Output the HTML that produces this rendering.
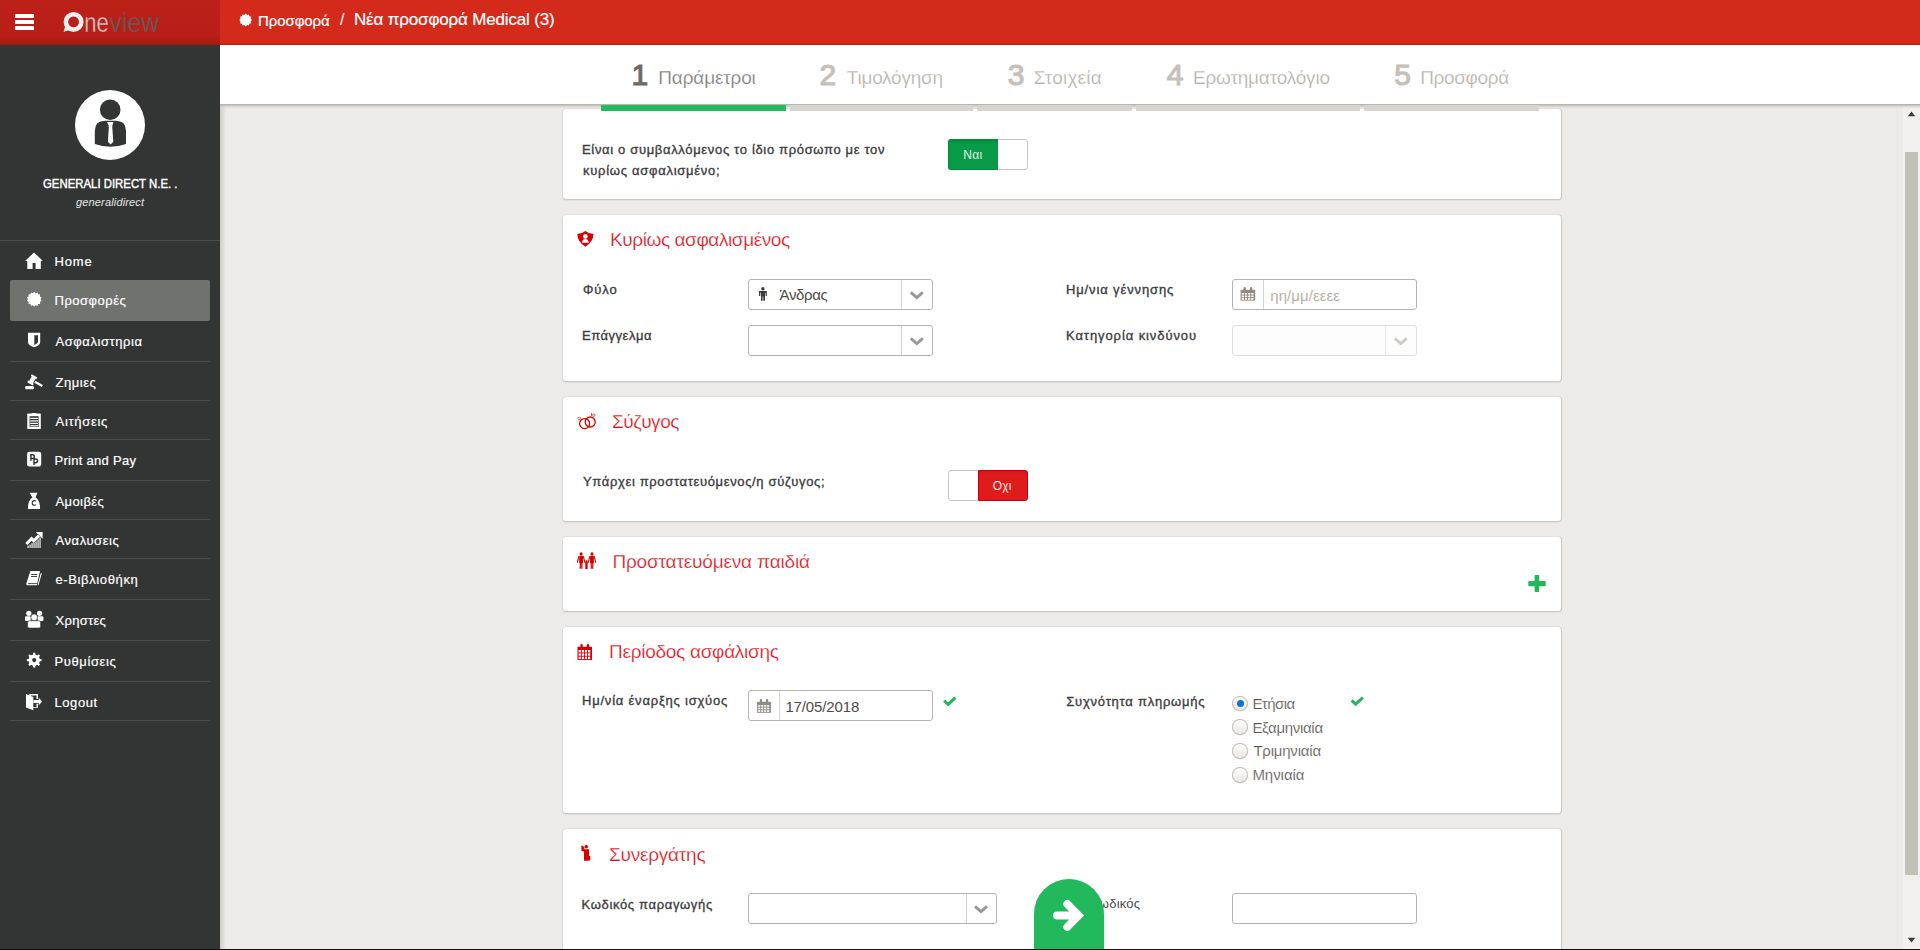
<!DOCTYPE html>
<html><head><meta charset="utf-8"><title>Oneview</title>
<style>
html,body{margin:0;padding:0;}
body{width:1920px;height:950px;overflow:hidden;position:relative;background:#ecebe9;font-family:"Liberation Sans", sans-serif;}
.t{position:absolute;white-space:nowrap;}
.a{position:absolute;}
#topbar{position:absolute;left:0;top:0;width:1920px;height:45px;background:linear-gradient(#d32a1b 0,#d32a1b 43px,#c91b0b 44px,#c91b0b 45px);}
#topbar-left{position:absolute;left:0;top:0;width:220px;height:45px;background:linear-gradient(#bb2019 0,#b91f18 36px,#a91d12 42px,#a01c0f 45px);}
#sidebar{position:absolute;left:0;top:45px;width:220px;height:905px;background:#333534;}
#tabs{position:absolute;left:220px;top:44px;width:1700px;height:60px;background:#fff;}
#tabshadow{position:absolute;left:220px;top:104px;width:1700px;height:5px;background:linear-gradient(#c9c6c0,rgba(236,235,233,0));}
.card{position:absolute;left:563px;width:998px;background:#fff;border-radius:2.5px;box-shadow:0 1px 2px rgba(60,50,40,.2),0 0 1px rgba(60,50,40,.32),1px 0 1px rgba(60,50,40,.1);}
.sep{position:absolute;left:10px;width:200px;height:1px;background:#4b4d4c;}
.prog{position:absolute;top:105px;height:6px;background:#d6d4cf;}
.inp{position:absolute;box-sizing:border-box;border:1px solid #b9b4ad;border-radius:3px;background:#fff;height:31px;}
.inp .dv{position:absolute;top:0;bottom:0;width:1px;background:#d8d5d0;}
.tg{position:absolute;box-sizing:border-box;border:1px solid #c9c5bf;border-radius:3px;background:#fff;width:80px;height:31px;overflow:hidden;}
.radio{position:absolute;width:15.5px;height:15.5px;box-sizing:border-box;border-radius:50%;border:1px solid #b9b4ae;box-shadow:0 0.5px 1px rgba(0,0,0,.12);background:linear-gradient(#fdfdfd,#e9e7e4);}

</style></head><body>
<div id="topbar"></div><div id="topbar-left"></div>
<div id="sidebar"></div>
<div class="a" style="left:0;top:240px;width:220px;height:1px;background:#4b4d4c"></div>
<div class="sep" style="top:361px"></div>
<div class="sep" style="top:400px"></div>
<div class="sep" style="top:439px"></div>
<div class="sep" style="top:480px"></div>
<div class="sep" style="top:519px"></div>
<div class="sep" style="top:558px"></div>
<div class="sep" style="top:599px"></div>
<div class="sep" style="top:640px"></div>
<div class="sep" style="top:681px"></div>
<div class="sep" style="top:720px"></div>
<div class="a" style="left:10px;top:280px;width:200px;height:41px;background:#70726d;border-radius:2px"></div>
<div class="a" style="left:220px;top:104px;width:6px;height:846px;background:linear-gradient(90deg,rgba(150,145,138,.35),rgba(236,235,233,0))"></div>
<div class="a" style="left:75px;top:90px;width:70px;height:70px;border-radius:50%;background:#fff"></div>
<div class="card" style="top:109px;height:90px"></div>
<div class="card" style="top:215px;height:166px"></div>
<div class="card" style="top:397px;height:124px"></div>
<div class="card" style="top:537px;height:74px"></div>
<div class="card" style="top:627px;height:186px"></div>
<div class="card" style="top:829px;height:160px"></div>
<div id="tabs2" class="a" style="left:220px;top:45px;width:1700px;height:59px;background:#fff"></div>
<div class="a" style="left:220px;top:104px;width:1700px;height:5px;background:linear-gradient(rgba(178,173,165,1),rgba(196,192,186,.75) 35%,rgba(214,211,206,.35) 70%,rgba(236,235,233,0))"></div>
<div class="prog" style="left:601px;width:185px;background:#22bb5b"></div>
<div class="prog" style="left:790px;width:183px"></div>
<div class="prog" style="left:977px;width:155px"></div>
<div class="prog" style="left:1136px;width:224px"></div>
<div class="prog" style="left:1364px;width:175px"></div>
<div class="t" style="display:none"></div>
<div class="tg" style="left:948px;top:139px"></div><div class="a" style="left:948px;top:139px;width:50px;height:31px;box-sizing:border-box;border:1px solid #078a3e;border-right:0;border-radius:3px 0 0 3px;background:linear-gradient(#008b3f,#0a9b49 4px,#0a9b49)"></div>
<div class="inp" style="left:748px;top:279px;width:185px"><div class="dv" style="left:152px"></div></div>
<div class="inp" style="left:748px;top:325px;width:185px"><div class="dv" style="left:152px"></div></div>
<div class="inp" style="left:1232px;top:279px;width:185px"><div class="dv" style="left:30px"></div></div>
<div class="inp" style="left:1232px;top:325px;width:185px;border-color:#e2dfdb;background:#fdfdfd"><div class="dv" style="left:152px;background:#e8e6e2"></div></div>
<div class="tg" style="left:948px;top:470px"></div><div class="a" style="left:978px;top:470px;width:50px;height:31px;box-sizing:border-box;border:1px solid #c9000c;border-radius:0 3px 3px 0;background:linear-gradient(#c81a1c,#e01b1b 4px,#e01b1b)"></div>
<div class="inp" style="left:748px;top:690px;width:185px"><div class="dv" style="left:30px"></div></div>
<div class="radio" style="left:1232px;top:695.5px"></div>
<div class="radio" style="left:1232px;top:719.3px"></div>
<div class="radio" style="left:1232px;top:743.1px"></div>
<div class="radio" style="left:1232px;top:767.1px"></div>
<div class="a" style="left:1236.5px;top:699.5px;width:7px;height:7px;border-radius:50%;background:#0b72dc"></div>
<div class="inp" style="left:748px;top:893px;width:249px"><div class="dv" style="left:217px"></div></div>
<div class="inp" style="left:1232px;top:893px;width:185px"></div>
<div class="t" id="bc1" style="left:258.00px;top:12.60px;font-size:15px;line-height:15px;color:#fff;font-weight:normal;letter-spacing:-0.081px;-webkit-text-stroke:0.2px #fff;">Προσφορά</div>
<div class="t" id="bcsl" style="left:340.00px;top:11.76px;font-size:16px;line-height:16px;color:#fff;font-weight:normal;">/</div>
<div class="t" id="bc2" style="left:354.00px;top:10.91px;font-size:17px;line-height:17px;color:#fff;font-weight:normal;letter-spacing:-0.168px;-webkit-text-stroke:0.2px #fff;">Νέα προσφορά Medical (3)</div>
<div class="t" id="gen" style="left:43.00px;top:176.77px;font-size:13.5px;line-height:13.5px;color:#fff;font-weight:normal;-webkit-text-stroke:0.45px #fff;transform:scaleX(0.843);transform-origin:0 0;">GENERALI DIRECT N.E. .</div>
<div class="t" id="gend" style="left:76.00px;top:196.59px;font-size:11px;line-height:11px;color:#e6e6e6;font-weight:normal;font-style:italic;letter-spacing:0.155px;">generalidirect</div>
<div class="t" id="m0" style="left:54.50px;top:254.80px;font-size:13px;line-height:13px;color:#fff;font-weight:normal;letter-spacing:0.851px;-webkit-text-stroke:0.2px #fff;">Home</div>
<div class="t" id="m1" style="left:54.50px;top:294.00px;font-size:13px;line-height:13px;color:#fff;font-weight:normal;letter-spacing:0.514px;-webkit-text-stroke:0.2px #fff;">Προσφορές</div>
<div class="t" id="m2" style="left:55.50px;top:334.90px;font-size:13px;line-height:13px;color:#fff;font-weight:normal;letter-spacing:0.573px;-webkit-text-stroke:0.2px #fff;">Ασφαλιστηρια</div>
<div class="t" id="m3" style="left:55.50px;top:376.40px;font-size:13px;line-height:13px;color:#fff;font-weight:normal;letter-spacing:0.531px;-webkit-text-stroke:0.2px #fff;">Ζημιες</div>
<div class="t" id="m4" style="left:55.50px;top:415.10px;font-size:13px;line-height:13px;color:#fff;font-weight:normal;letter-spacing:0.710px;-webkit-text-stroke:0.2px #fff;">Αιτήσεις</div>
<div class="t" id="m5" style="left:54.50px;top:453.80px;font-size:13px;line-height:13px;color:#fff;font-weight:normal;letter-spacing:0.288px;-webkit-text-stroke:0.2px #fff;">Print and Pay</div>
<div class="t" id="m6" style="left:55.50px;top:494.50px;font-size:13px;line-height:13px;color:#fff;font-weight:normal;letter-spacing:0.408px;-webkit-text-stroke:0.2px #fff;">Αμοιβές</div>
<div class="t" id="m7" style="left:55.50px;top:534.00px;font-size:13px;line-height:13px;color:#fff;font-weight:normal;letter-spacing:0.568px;-webkit-text-stroke:0.2px #fff;">Αναλυσεις</div>
<div class="t" id="m8" style="left:55.50px;top:572.70px;font-size:13px;line-height:13px;color:#fff;font-weight:normal;letter-spacing:0.621px;-webkit-text-stroke:0.2px #fff;">e-Βιβλιοθήκη</div>
<div class="t" id="m9" style="left:55.50px;top:613.80px;font-size:13px;line-height:13px;color:#fff;font-weight:normal;letter-spacing:0.292px;-webkit-text-stroke:0.2px #fff;">Χρηστες</div>
<div class="t" id="m10" style="left:54.50px;top:654.60px;font-size:13px;line-height:13px;color:#fff;font-weight:normal;letter-spacing:0.613px;-webkit-text-stroke:0.2px #fff;">Ρυθμίσεις</div>
<div class="t" id="m11" style="left:54.50px;top:695.80px;font-size:13px;line-height:13px;color:#fff;font-weight:normal;letter-spacing:0.570px;-webkit-text-stroke:0.2px #fff;">Logout</div>
<div class="t" id="tn0" style="left:631.50px;top:60.11px;font-size:30px;line-height:30px;color:#6e6a66;font-weight:normal;-webkit-text-stroke:1.1px #6e6a66;">1</div>
<div class="t" id="tl0" style="left:658.30px;top:68.12px;font-size:19px;line-height:19px;color:#7c7874;font-weight:normal;letter-spacing:-0.166px;-webkit-text-stroke:0.25px #fff;">Παράμετροι</div>
<div class="t" id="tn1" style="left:819.50px;top:60.11px;font-size:30px;line-height:30px;color:#c5c0ba;font-weight:normal;-webkit-text-stroke:1.1px #c5c0ba;">2</div>
<div class="t" id="tl1" style="left:846.80px;top:68.12px;font-size:19px;line-height:19px;color:#b5b0a9;font-weight:normal;letter-spacing:-0.239px;-webkit-text-stroke:0.25px #fff;">Τιμολόγηση</div>
<div class="t" id="tn2" style="left:1007.80px;top:60.11px;font-size:30px;line-height:30px;color:#c5c0ba;font-weight:normal;-webkit-text-stroke:1.1px #c5c0ba;">3</div>
<div class="t" id="tl2" style="left:1033.70px;top:68.12px;font-size:19px;line-height:19px;color:#b5b0a9;font-weight:normal;letter-spacing:0.211px;-webkit-text-stroke:0.25px #fff;">Στοιχεία</div>
<div class="t" id="tn3" style="left:1166.70px;top:60.11px;font-size:30px;line-height:30px;color:#c5c0ba;font-weight:normal;-webkit-text-stroke:1.1px #c5c0ba;">4</div>
<div class="t" id="tl3" style="left:1193.00px;top:68.12px;font-size:19px;line-height:19px;color:#b5b0a9;font-weight:normal;letter-spacing:-0.199px;-webkit-text-stroke:0.25px #fff;">Ερωτηματολόγιο</div>
<div class="t" id="tn4" style="left:1394.20px;top:60.11px;font-size:30px;line-height:30px;color:#c5c0ba;font-weight:normal;-webkit-text-stroke:1.1px #c5c0ba;">5</div>
<div class="t" id="tl4" style="left:1420.20px;top:68.12px;font-size:19px;line-height:19px;color:#b5b0a9;font-weight:normal;letter-spacing:-0.360px;-webkit-text-stroke:0.25px #fff;">Προσφορά</div>
<div class="t" id="c1l1" style="left:582.00px;top:143.20px;font-size:13px;line-height:13px;color:#3d3d3d;font-weight:normal;letter-spacing:0.665px;-webkit-text-stroke:0.35px #3d3d3d;">Είναι ο συμβαλλόμενος το ίδιο πρόσωπο με τον</div>
<div class="t" id="c1l2" style="left:583.00px;top:163.50px;font-size:13px;line-height:13px;color:#3d3d3d;font-weight:normal;letter-spacing:0.732px;-webkit-text-stroke:0.35px #3d3d3d;">κυρίως ασφαλισμένο;</div>
<div class="t" id="nai" style="left:963.20px;top:148.54px;font-size:12px;line-height:12px;color:#fff;font-weight:normal;letter-spacing:0.398px;-webkit-text-stroke:0.15px #0a9b49;">Ναι</div>
<div class="t" id="c2t" style="left:610.00px;top:229.92px;font-size:19px;line-height:19px;color:#d8121b;font-weight:normal;letter-spacing:-0.406px;-webkit-text-stroke:0.25px #fff;">Κυρίως ασφαλισμένος</div>
<div class="t" id="c2a" style="left:583.00px;top:282.50px;font-size:13px;line-height:13px;color:#3d3d3d;font-weight:normal;letter-spacing:0.938px;-webkit-text-stroke:0.35px #3d3d3d;">Φύλο</div>
<div class="t" id="c2b" style="left:582.00px;top:328.90px;font-size:13px;line-height:13px;color:#3d3d3d;font-weight:normal;letter-spacing:0.530px;-webkit-text-stroke:0.35px #3d3d3d;">Επάγγελμα</div>
<div class="t" id="c2c" style="left:1066.00px;top:283.00px;font-size:13px;line-height:13px;color:#3d3d3d;font-weight:normal;letter-spacing:0.873px;-webkit-text-stroke:0.35px #3d3d3d;">Ημ/νια γέννησης</div>
<div class="t" id="c2d" style="left:1066.00px;top:328.70px;font-size:13px;line-height:13px;color:#3d3d3d;font-weight:normal;letter-spacing:0.912px;-webkit-text-stroke:0.35px #3d3d3d;">Κατηγορία κινδύνου</div>
<div class="t" id="andras" style="left:779.60px;top:287.40px;font-size:15px;line-height:15px;color:#4f4b47;font-weight:normal;letter-spacing:-0.359px;">Άνδρας</div>
<div class="t" id="ph" style="left:1270.30px;top:287.80px;font-size:15px;line-height:15px;color:#b8b1a8;font-weight:normal;letter-spacing:0.070px;">ηη/μμ/εεεε</div>
<div class="t" id="c3t" style="left:612.00px;top:411.92px;font-size:19px;line-height:19px;color:#d8121b;font-weight:normal;letter-spacing:-0.445px;-webkit-text-stroke:0.25px #fff;">Σύζυγος</div>
<div class="t" id="c3a" style="left:583.00px;top:474.80px;font-size:13px;line-height:13px;color:#3d3d3d;font-weight:normal;letter-spacing:0.650px;-webkit-text-stroke:0.35px #3d3d3d;">Υπάρχει προστατευόμενος/η σύζυγος;</div>
<div class="t" id="ochi" style="left:992.80px;top:480.14px;font-size:12px;line-height:12px;color:#fff;font-weight:normal;letter-spacing:0.184px;-webkit-text-stroke:0.15px #e01b1b;">Οχι</div>
<div class="t" id="c4t" style="left:612.40px;top:552.32px;font-size:19px;line-height:19px;color:#d8121b;font-weight:normal;letter-spacing:-0.170px;-webkit-text-stroke:0.25px #fff;">Προστατευόμενα παιδιά</div>
<div class="t" id="c5t" style="left:609.00px;top:641.72px;font-size:19px;line-height:19px;color:#d8121b;font-weight:normal;letter-spacing:-0.270px;-webkit-text-stroke:0.25px #fff;">Περίοδος ασφάλισης</div>
<div class="t" id="c5a" style="left:582.00px;top:694.20px;font-size:13px;line-height:13px;color:#3d3d3d;font-weight:normal;letter-spacing:0.789px;-webkit-text-stroke:0.35px #3d3d3d;">Ημ/νία έναρξης ισχύος</div>
<div class="t" id="date" style="left:785.40px;top:698.50px;font-size:15px;line-height:15px;color:#4f4b47;font-weight:normal;letter-spacing:-0.126px;">17/05/2018</div>
<div class="t" id="c5b" style="left:1066.30px;top:694.60px;font-size:13px;line-height:13px;color:#3d3d3d;font-weight:normal;letter-spacing:0.769px;-webkit-text-stroke:0.35px #3d3d3d;">Συχνότητα πληρωμής</div>
<div class="t" id="r0" style="left:1252.40px;top:695.70px;font-size:15px;line-height:15px;color:#58534e;font-weight:normal;letter-spacing:-0.573px;-webkit-text-stroke:0.2px #fff;">Ετήσια</div>
<div class="t" id="r1" style="left:1252.40px;top:719.50px;font-size:15px;line-height:15px;color:#58534e;font-weight:normal;letter-spacing:-0.312px;-webkit-text-stroke:0.2px #fff;">Εξαμηνιαία</div>
<div class="t" id="r2" style="left:1253.40px;top:743.30px;font-size:15px;line-height:15px;color:#58534e;font-weight:normal;letter-spacing:-0.206px;-webkit-text-stroke:0.2px #fff;">Τριμηνιαία</div>
<div class="t" id="r3" style="left:1252.40px;top:767.30px;font-size:15px;line-height:15px;color:#58534e;font-weight:normal;letter-spacing:-0.046px;-webkit-text-stroke:0.2px #fff;">Μηνιαία</div>
<div class="t" id="c6t" style="left:609.00px;top:844.72px;font-size:19px;line-height:19px;color:#d8121b;font-weight:normal;letter-spacing:-0.230px;-webkit-text-stroke:0.25px #fff;">Συνεργάτης</div>
<div class="t" id="c6a" style="left:581.50px;top:897.60px;font-size:13px;line-height:13px;color:#3d3d3d;font-weight:normal;letter-spacing:0.661px;-webkit-text-stroke:0.35px #3d3d3d;">Κωδικός παραγωγής</div>
<div class="t" id="c6b" style="left:1067.00px;top:896.50px;font-size:13px;line-height:13px;color:#4a4a4a;font-weight:normal;letter-spacing:0.203px;">Υποκωδικός</div>
<svg class="a" style="left:0;top:0" width="1920" height="950" viewBox="0 0 1920 950"><rect x="15" y="14" width="19" height="4" rx="0.8" fill="#fff"/><rect x="15" y="20" width="19" height="4" rx="0.8" fill="#fff"/><rect x="15" y="26" width="19" height="4" rx="0.8" fill="#fff"/><circle cx="73.6" cy="21.9" r="7.7" fill="none" stroke="#f1efed" stroke-width="4.6"/><path d="M65.2 26.5 L63.6 31.8 L69.5 30.2 Z" fill="#f1efed"/><text x="84.3" y="31.6" font-size="27" fill="#cdc7c1" stroke="#bb2019" stroke-width="0.35" textLength="24.6" lengthAdjust="spacingAndGlyphs" font-family="Liberation Sans">ne</text><text x="109.6" y="31.6" font-size="27" fill="#5f5d5b" stroke="#bb2019" stroke-width="0.35" textLength="49.6" lengthAdjust="spacingAndGlyphs" font-family="Liberation Sans">view</text><polygon points="245.60,13.60 246.97,14.88 248.80,14.46 249.35,16.25 251.14,16.80 250.72,18.63 252.00,20.00 250.72,21.37 251.14,23.20 249.35,23.75 248.80,25.54 246.97,25.12 245.60,26.40 244.23,25.12 242.40,25.54 241.85,23.75 240.06,23.20 240.48,21.37 239.20,20.00 240.48,18.63 240.06,16.80 241.85,16.25 242.40,14.46 244.23,14.88" fill="#fff"/><path d="M25.3 260.8 L34 252.5 L42.7 260.8 L40.8 261.2 L40.8 269 L35.6 269 L35.6 263 L32.6 263 L32.6 269 L27.3 269 L27.3 261.2 Z" fill="#fff"/><polygon points="34.30,291.70 35.68,293.16 37.55,292.44 38.17,294.35 40.16,294.52 39.89,296.51 41.61,297.53 40.50,299.20 41.61,300.87 39.89,301.89 40.16,303.88 38.17,304.05 37.55,305.96 35.68,305.24 34.30,306.70 32.92,305.24 31.05,305.96 30.43,304.05 28.44,303.88 28.71,301.89 26.99,300.87 28.10,299.20 26.99,297.53 28.71,296.51 28.44,294.52 30.43,294.35 31.05,292.44 32.92,293.16" fill="#fff"/><path d="M28 332.7 H40.2 V342 Q40.2 345.5 34.1 347.2 Q28 345.5 28 342 Z" fill="#fff"/><path d="M34.3 335.2 H38 V342 Q37.6 343.6 34.3 344.9 Z" fill="#333534"/><polygon points="31.79,376.38 35.61,378.58 32.81,383.42 28.99,381.22" fill="#fff"/><polygon points="31.83,374.33 37.37,377.53 36.37,379.27 30.83,376.07" fill="#fff"/><polygon points="28.23,380.53 33.77,383.73 32.77,385.47 27.23,382.27" fill="#fff"/><polygon points="35.45,380.65 42.90,384.95 41.75,386.95 34.30,382.65" fill="#fff"/><rect x="25.2" y="386" width="8.7" height="3.2" rx="1.2" fill="#fff"/><rect x="27.3" y="413.6" width="13.5" height="15.5" rx="0.6" fill="#fff"/><rect x="29.6" y="416.2" width="9" height="10.8" fill="#333534"/><rect x="30.2" y="417.8" width="7.8" height="1.2" fill="#fff"/><rect x="30.2" y="420.3" width="7.8" height="1.2" fill="#fff"/><rect x="30.2" y="422.8" width="7.8" height="1.2" fill="#fff"/><rect x="30.2" y="425.2" width="7.8" height="1.2" fill="#fff"/><rect x="31.5" y="413" width="5" height="2" rx="1" fill="#fff"/><rect x="27.1" y="451.7" width="14.1" height="14.7" rx="2.2" fill="#fff"/><path d="M30.9 454.1 V460.8 M30.9 454.8 H32.5 A1.85 1.85 0 0 1 32.5 458.5 H30.9" fill="none" stroke="#333534" stroke-width="1.45"/><path d="M34 458.3 V465 M34 459 H35.7 A1.85 1.85 0 0 1 35.7 462.7 H34" fill="none" stroke="#333534" stroke-width="1.45"/><path d="M29.6 492.8 L37.4 492.8 L35.6 497.3 Q40.1 500.5 40.1 508.9 H27.9 Q27.9 500.5 32.3 497.3 Z" fill="#fff"/><path d="M36 501.2 Q35.3 500.6 34.4 500.6 Q32.2 500.6 32.2 502.9 Q32.2 505.2 34.4 505.2 Q35.3 505.2 36 504.6" fill="none" stroke="#333534" stroke-width="1.1"/><path d="M26.3 544 L31.6 538.6 L33.8 540.8 L39 535.6" fill="none" stroke="#fff" stroke-width="3"/><path d="M35.8 532 H42.6 V538.8 Z" fill="#fff"/><rect x="27.5" y="545.5" width="1.1" height="2.5" fill="#fff"/><rect x="29.5" y="544.5" width="1.1" height="3.5" fill="#fff"/><rect x="31.5" y="543" width="1.1" height="5" fill="#fff"/><rect x="33.5" y="543" width="1.1" height="5" fill="#fff"/><rect x="35.5" y="541.5" width="1.1" height="6.5" fill="#fff"/><rect x="37.5" y="539.5" width="1.1" height="8.5" fill="#fff"/><rect x="39.5" y="537.5" width="1.1" height="10.5" fill="#fff"/><path d="M30.3 570.9 H40 L36.8 585.3 H27.5 Q26 585.3 26.4 583.6 Z" fill="#fff"/><path d="M40.8 573 L41.8 573.5 L38.5 585 L37.6 585 Z" fill="#fff"/><rect x="31.3" y="574" width="6" height="0.9" fill="#333534"/><rect x="31" y="576" width="6" height="0.9" fill="#333534"/><rect x="28" y="583.2" width="8.8" height="0.9" fill="#333534"/><circle cx="28.8" cy="613.3" r="2.6" fill="#fff"/><circle cx="39.6" cy="613.3" r="2.6" fill="#fff"/><rect x="25" y="616.3" width="5.8" height="4.6" rx="1" fill="#fff"/><rect x="37.6" y="616.3" width="5.8" height="4.6" rx="1" fill="#fff"/><circle cx="34.2" cy="617.4" r="3.3" fill="#fff" stroke="#333534" stroke-width="0.6"/><rect x="27.6" y="620.8" width="13" height="7.2" rx="1.6" fill="#fff" stroke="#333534" stroke-width="0.6"/><polygon points="33.00,654.63 33.09,652.78 35.31,652.78 35.40,654.63 37.22,655.38 38.58,654.14 40.16,655.72 38.92,657.08 39.67,658.90 41.52,658.99 41.52,661.21 39.67,661.30 38.92,663.12 40.16,664.48 38.58,666.06 37.22,664.82 35.40,665.57 35.31,667.42 33.09,667.42 33.00,665.57 31.18,664.82 29.82,666.06 28.24,664.48 29.48,663.12 28.73,661.30 26.88,661.21 26.88,658.99 28.73,658.90 29.48,657.08 28.24,655.72 29.82,654.14 31.18,655.38" fill="#fff"/><circle cx="34.2" cy="660.1" r="5.6" fill="#fff"/><circle cx="34.2" cy="660.1" r="2.1" fill="#333534"/><path d="M29.2 694 H38 V699 H36.5 V695.6 H30.7 V707 H36.5 V703.8 H38 V707.8 H29.2 Z" fill="#fff"/><path d="M26 694 L33.3 697 V710.2 L26 707.6 Z" fill="#fff"/><path d="M33.5 700.1 H38.8 V697.8 L42.2 701.5 L38.8 705.2 V702.9 H33.5 Z" fill="#fff"/><circle cx="110.2" cy="109.8" r="10.3" fill="#333534"/><path d="M94.8 144 V131 Q94.8 120.8 105 120.8 H115.8 Q126 120.8 126 131 V144 Q110.4 149.5 94.8 144 Z" fill="#333534"/><path d="M107.1 122 H113.4 L112.2 126.3 L113.3 141.8 L110.6 144.4 L107.9 141.8 L108.9 126.3 Z" fill="#fff"/><path d="M108.3 126.4 H112.2" stroke="#ddd" stroke-width="0.5"/><path d="M585.4 231 Q581.8 234 577.3 234.1 Q577.6 242 585.4 246.8 Q593.2 242 593.5 234.1 Q589 234 585.4 231 Z" fill="#d60000"/><circle cx="585.4" cy="236.4" r="2.3" fill="#fff"/><path d="M582.1 242.8 Q582.1 238.9 585.4 238.9 Q588.7 238.9 588.7 242.8 Z" fill="#fff"/><circle cx="584.6" cy="423.6" r="5" fill="none" stroke="#d60000" stroke-width="1.3"/><circle cx="590.2" cy="422" r="5" fill="none" stroke="#d60000" stroke-width="1.3"/><circle cx="579.3" cy="418.5" r="1.3" fill="none" stroke="#e3454a" stroke-width="0.9"/><path d="M591.5 413 V416" stroke="#e3454a" stroke-width="1"/><circle cx="593.8" cy="415.2" r="1.2" fill="none" stroke="#e3454a" stroke-width="0.9"/><circle cx="581.1" cy="553.9" r="1.55" fill="#d60000"/><path d="M579.2 556.6 Q579.2 555.8 580.0 555.8 H582.2 Q583.0 555.8 583.0 556.6 V563 H582.5 V568.8 H581.25 V563.5 H580.95 V568.8 H579.7 V563 H579.2 Z" fill="#d60000"/><path d="M578.8000000000001 556.6 L577.4 562.2 M583.4 556.6 L584.8000000000001 562.2" stroke="#d60000" stroke-width="1.1" stroke-linecap="round"/><circle cx="592.0" cy="553.9" r="1.55" fill="#d60000"/><path d="M590.1 556.6 Q590.1 555.8 590.9 555.8 H593.1 Q593.9 555.8 593.9 556.6 V563 H593.4 V568.8 H592.15 V563.5 H591.85 V568.8 H590.6 V563 H590.1 Z" fill="#d60000"/><path d="M589.7 556.6 L588.3 562.2 M594.3 556.6 L595.7 562.2" stroke="#d60000" stroke-width="1.1" stroke-linecap="round"/><circle cx="586.5" cy="561.3" r="1.15" fill="#d60000"/><path d="M585.3 563 H587.7 V569 H585.3 Z" fill="#d60000"/><path d="M584.6 562.6 L588.4 562.6" stroke="#d60000" stroke-width="0.9"/><rect x="577.5" y="646.8" width="14.5" height="13.2" fill="#d60000"/><rect x="580.4" y="644" width="2.32" height="5" rx="1.16" fill="#d60000"/><rect x="586.78" y="644" width="2.32" height="5" rx="1.16" fill="#d60000"/><rect x="578.60" y="650.00" width="2.25" height="2.43" fill="#fff"/><rect x="581.75" y="650.00" width="2.25" height="2.43" fill="#fff"/><rect x="584.90" y="650.00" width="2.25" height="2.43" fill="#fff"/><rect x="588.05" y="650.00" width="2.25" height="2.43" fill="#fff"/><rect x="578.60" y="653.33" width="2.25" height="2.43" fill="#fff"/><rect x="581.75" y="653.33" width="2.25" height="2.43" fill="#fff"/><rect x="584.90" y="653.33" width="2.25" height="2.43" fill="#fff"/><rect x="588.05" y="653.33" width="2.25" height="2.43" fill="#fff"/><rect x="578.60" y="656.67" width="2.25" height="2.43" fill="#fff"/><rect x="581.75" y="656.67" width="2.25" height="2.43" fill="#fff"/><rect x="584.90" y="656.67" width="2.25" height="2.43" fill="#fff"/><rect x="588.05" y="656.67" width="2.25" height="2.43" fill="#fff"/><circle cx="586.2" cy="846.7" r="1.8" fill="#d60000"/><path d="M581.3 845.8 L583.2 845.8 L584.6 849.2 H589 V856 H590.2 V860.5 H588.5 V860.8 H584 V851.6 L581.5 851 Z" fill="#d60000"/><circle cx="762.9" cy="288.8" r="1.7" fill="#3c3c3c"/><path d="M759 291 H766.8 V296 H765.6 V292.8 H765 V300.8 H763.3 V296.5 H762.6 V300.8 H761 V292.8 H760.3 V296 H759 Z" fill="#3c3c3c"/><rect x="1240.6" y="289.8" width="14.6" height="10.8" fill="#918b85"/><rect x="1243.52" y="287" width="2.336" height="5" rx="1.168" fill="#918b85"/><rect x="1249.944" y="287" width="2.336" height="5" rx="1.168" fill="#918b85"/><rect x="1241.70" y="293.00" width="2.27" height="1.63" fill="#fff"/><rect x="1244.88" y="293.00" width="2.27" height="1.63" fill="#fff"/><rect x="1248.05" y="293.00" width="2.27" height="1.63" fill="#fff"/><rect x="1251.23" y="293.00" width="2.27" height="1.63" fill="#fff"/><rect x="1241.70" y="295.53" width="2.27" height="1.63" fill="#fff"/><rect x="1244.88" y="295.53" width="2.27" height="1.63" fill="#fff"/><rect x="1248.05" y="295.53" width="2.27" height="1.63" fill="#fff"/><rect x="1251.23" y="295.53" width="2.27" height="1.63" fill="#fff"/><rect x="1241.70" y="298.07" width="2.27" height="1.63" fill="#fff"/><rect x="1244.88" y="298.07" width="2.27" height="1.63" fill="#fff"/><rect x="1248.05" y="298.07" width="2.27" height="1.63" fill="#fff"/><rect x="1251.23" y="298.07" width="2.27" height="1.63" fill="#fff"/><rect x="757.1" y="701.8" width="13.8" height="11.0" fill="#918b85"/><rect x="759.86" y="699" width="2.208" height="5" rx="1.104" fill="#918b85"/><rect x="765.932" y="699" width="2.208" height="5" rx="1.104" fill="#918b85"/><rect x="758.20" y="705.00" width="2.08" height="1.70" fill="#fff"/><rect x="761.18" y="705.00" width="2.08" height="1.70" fill="#fff"/><rect x="764.15" y="705.00" width="2.08" height="1.70" fill="#fff"/><rect x="767.12" y="705.00" width="2.08" height="1.70" fill="#fff"/><rect x="758.20" y="707.60" width="2.08" height="1.70" fill="#fff"/><rect x="761.18" y="707.60" width="2.08" height="1.70" fill="#fff"/><rect x="764.15" y="707.60" width="2.08" height="1.70" fill="#fff"/><rect x="767.12" y="707.60" width="2.08" height="1.70" fill="#fff"/><rect x="758.20" y="710.20" width="2.08" height="1.70" fill="#fff"/><rect x="761.18" y="710.20" width="2.08" height="1.70" fill="#fff"/><rect x="764.15" y="710.20" width="2.08" height="1.70" fill="#fff"/><rect x="767.12" y="710.20" width="2.08" height="1.70" fill="#fff"/><path d="M910.8 292.4 L916.8 297.6 L922.8 292.4" fill="none" stroke="#9a9693" stroke-width="2.8"/><path d="M910.8 338.4 L916.8 343.6 L922.8 338.4" fill="none" stroke="#9a9693" stroke-width="2.8"/><path d="M1394.8 338.4 L1400.8 343.6 L1406.8 338.4" fill="none" stroke="#cfcbc6" stroke-width="2.8"/><path d="M975 906.4 L981 911.6 L987 906.4" fill="none" stroke="#9a9693" stroke-width="2.8"/><path d="M944.1 700.5999999999999 L948.2 704.4 L955.4 697.6999999999999" fill="none" stroke="#22b75a" stroke-width="3"/><path d="M1351.6 700.4 L1355.7 704.2 L1362.9 697.5" fill="none" stroke="#22b75a" stroke-width="3"/><rect x="1528.3" y="581" width="17.4" height="5.2" rx="0.8" fill="#22b75a"/><rect x="1534.6" y="575" width="4.6" height="17" rx="0.8" fill="#22b75a"/></svg>
<div class="a" style="left:1034px;top:879px;width:70px;height:120px;border-radius:35px 35px 0 0;background:#22b85c;box-shadow:0 0 2px rgba(0,0,0,.15)"></div>
<svg class="a" style="left:1034px;top:879px" width="70" height="71"><path d="M23 36.5 H42 M33.3 25 L44.6 36.5 L33.3 48" fill="none" stroke="#fff" stroke-width="7.8" stroke-linecap="round" stroke-linejoin="miter"/></svg>
<div class="a" style="left:1903px;top:105px;width:17px;height:845px;background:#f1f0ee"></div>
<div class="a" style="left:1905px;top:152px;width:13px;height:723px;background:#c3c0b8"></div>
<div class="a" style="left:1903px;top:104px;width:17px;height:5px;background:linear-gradient(rgba(178,173,165,1),rgba(196,192,186,.75) 35%,rgba(214,211,206,.35) 70%,rgba(236,235,233,0))"></div>
<svg class="a" style="left:1903px;top:105px" width="17" height="845"><path d="M4.8 11.3 L8.5 6.6 L12.3 11.3 Z M4.8 832.8 L8.5 837.5 L12.3 832.8 Z" fill="#3a3a3a"/></svg>
<div class="a" style="left:0;top:949px;width:1920px;height:1px;background:#111"></div>
</body></html>
